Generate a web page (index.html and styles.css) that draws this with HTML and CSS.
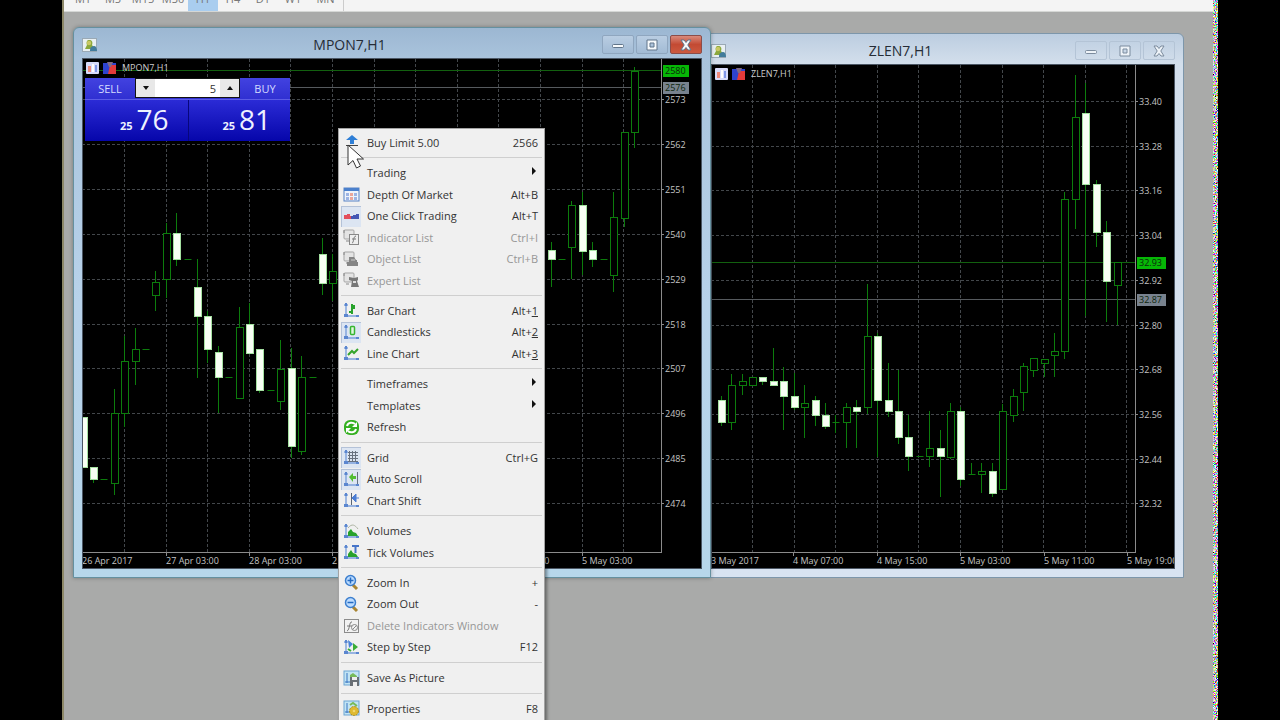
FILE: index.html
```html
<!DOCTYPE html>
<html lang="en">
<head>
<meta charset="utf-8">
<title>Trading terminal</title>
<link rel="stylesheet" href="styles.css">
</head>
<body>
<svg class="defs" aria-hidden="true">
  <defs>
    <g id="axes"><path d="M3 1v13h13M1 3h4M1 14h4" fill="none" stroke="#7ba0dc" stroke-width="1.4"/><path d="M2 1h2v3H2zM1 12h4v3H1zM13 13h3v2h-3z" fill="#5b86cf"/></g>
    <g id="list"><rect x="1" y="1" width="10" height="9" rx="1" fill="#e4e4e4" stroke="#a5a5a5"/><path d="M1 1v3M3 12h3" stroke="#888"/></g>
    <g id="appicon"><rect x=".5" y=".5" width="14" height="13" fill="#e9f0f2" stroke="#9aa9b5"/><path d="M7 2c3 0 4 2 3 5l3 4H3l2-4C4 4 5 2 7 2z" fill="#8ba83c"/><circle cx="7" cy="5" r="2.200" fill="#c9c763"/><path d="M8 12c0-3 2-4 4-4s3 2 3 5H8z" fill="#427c9c"/></g>
    <g id="depthicon"><rect width="13" height="12" rx="1" fill="#d8dcfa"/><path d="M2 4h3v6H2z" fill="#ef8b7c"/><path d="M6 2h2v8H6z" fill="#fff"/><path d="M9 3h2v7H9z" fill="#8097e8"/></g>
    <g id="clickicon"><path d="M0 1h13v11H0z" fill="#2e43cf"/><path d="M7 3h6v9H5z" fill="#e33b3b"/><path d="M4 0h6L8 5H6z" fill="#806b86"/></g>
  </defs>
</svg>
<div class="screen">
  <div class="terminal">
    <nav class="timeframes" aria-label="Timeframes">
      <button>M1</button><button>M5</button><button>M15</button><button>M30</button><button class="active">H1</button><button>H4</button><button>D1</button><button>W1</button><button>MN</button>
    </nav>
    <main class="workspace">
      <section class="window window-back">
        <header class="titlebar">
          <svg class="appicon" viewBox="0 0 15 14"><use href="#appicon"/></svg>
          <h2>ZLEN7,H1</h2>
          <button aria-label="Minimize"><svg viewBox="0 0 14 12"><rect x="1.500" y="5.500" width="11" height="3" rx="1"/></svg></button>
          <button aria-label="Maximize"><svg viewBox="0 0 14 12"><path fill-rule="evenodd" d="M2 1h10v10H2zM5 4h4v4H5z"/></svg></button>
          <button aria-label="Close"><svg viewBox="0 0 14 12"><path d="M2 1h3l2 2.500L9 1h3L8.800 6l3.200 5H9L7 8.500 5 11H2l3.200-5z"/></svg></button>
        </header>
        <div class="client">
          <svg class="chart" id="chart-zlen" viewBox="711 64 464 505"></svg>
          <div class="caption"><svg viewBox="0 0 13 12"><use href="#depthicon"/></svg><svg viewBox="0 0 13 12"><use href="#clickicon"/></svg><span>ZLEN7,H1</span></div>
        </div>
      </section>
      <section class="window window-front">
        <header class="titlebar">
          <svg class="appicon" viewBox="0 0 15 14"><use href="#appicon"/></svg>
          <h2>MPON7,H1</h2>
          <button aria-label="Minimize"><svg viewBox="0 0 14 12"><rect x="1.500" y="5.500" width="11" height="3" rx="1"/></svg></button>
          <button aria-label="Maximize"><svg viewBox="0 0 14 12"><path fill-rule="evenodd" d="M2 1h10v10H2zM5 4h4v4H5z"/></svg></button>
          <button class="close" aria-label="Close"><svg viewBox="0 0 14 12"><path d="M2 1h3l2 2.500L9 1h3L8.800 6l3.200 5H9L7 8.500 5 11H2l3.200-5z"/></svg></button>
        </header>
        <div class="client">
          <svg class="chart" id="chart-mpon" viewBox="82 58 620 511"></svg>
          <div class="caption"><svg viewBox="0 0 13 12"><use href="#depthicon"/></svg><svg viewBox="0 0 13 12"><use href="#clickicon"/></svg><span>MPON7,H1</span></div>
          <div class="oneclick">
            <div class="orders">
              <button class="side">SELL</button>
              <div class="volume"><button aria-label="Decrease volume"><i class="down"></i></button><input type="text" value="5" aria-label="Volume"><button aria-label="Increase volume"><i class="up"></i></button></div>
              <button class="side">BUY</button>
            </div>
            <div class="quotes">
              <button class="quote"><small>25</small><span>76</span></button>
              <button class="quote"><small>25</small><span>81</span></button>
            </div>
          </div>
        </div>
      </section>

      <div class="menu" role="menu">
        <div class="group">
          <button><svg class="ico" viewBox="0 0 17 17"><path d="M9 1l6 5h-4v4H7V6H3z" fill="#2f7fd6"/><path d="M3 11.500h12" stroke="#444"/></svg><span>Buy Limit 5.00</span><kbd>2566</kbd></button>
        </div>
        <div class="group">
          <button><i class="ico"></i><span>Trading</span><b class="arrow"></b></button>
          <button><svg class="ico" viewBox="0 0 17 17"><rect x="1" y="2" width="15" height="13" fill="#eef3fb" stroke="#5681c4"/><path d="M1 2h15v3H1z" fill="#4b80cc"/><path d="M3 7h3v3H3zM11 7h3v3h-3zM3 11h3v3H3zM11 11h3v3h-3z" fill="#9db4e4"/><path d="M7 7h3v3H7zM7 11h3v3H7z" fill="#eaa79b"/></svg><span>Depth Of Market</span><kbd>Alt+B</kbd></button>
          <button class="checked"><svg class="ico" viewBox="0 0 17 17"><path d="M1 7h3V6h3v2h2v3H1z" fill="#e44f5c"/><path d="M8 8h2V7h3V6h3v5H8z" fill="#4457b4"/></svg><span>One Click Trading</span><kbd>Alt+T</kbd></button>
          <button disabled><svg class="ico" viewBox="0 0 17 17"><use href="#list"/><rect x="6.500" y="5.500" width="9" height="10" fill="#eee" stroke="#888"/><path d="M9 14c2 0 1-7 4-7M9 10h4" fill="none" stroke="#777"/></svg><span>Indicator List</span><kbd>Ctrl+I</kbd></button>
          <button disabled><svg class="ico" viewBox="0 0 17 17"><use href="#list"/><path d="M6 6h5l2 3h1v2h1v4H4v-4h2z" fill="#858585"/><path d="M8 9h4" stroke="#ccc"/></svg><span>Object List</span><kbd>Ctrl+B</kbd></button>
          <button disabled><svg class="ico" viewBox="0 0 17 17"><use href="#list"/><path d="M6 5l5 1 4-1v3l-1 1 2 6H8l1-6-3-1z" fill="#777"/><path d="M10 9h3v2h-3z" fill="#ddd"/></svg><span>Expert List</span></button>
        </div>
        <div class="group">
          <button><svg class="ico" viewBox="0 0 17 17"><use href="#axes"/><path d="M9 2v10M9 4h3M6 10h3M11 3v4" fill="none" stroke="#28a32c" stroke-width="2"/></svg><span>Bar Chart</span><kbd>Alt+<u>1</u></kbd></button>
          <button class="checked"><svg class="ico" viewBox="0 0 17 17"><use href="#axes"/><rect x="7.500" y="2.500" width="4" height="8" rx="1" fill="#e2f6df" stroke="#35b530" stroke-width="1.500"/></svg><span>Candlesticks</span><kbd>Alt+<u>2</u></kbd></button>
          <button><svg class="ico" viewBox="0 0 17 17"><use href="#axes"/><path d="M5 10l4-4 2 2 4-4" fill="none" stroke="#35a52c" stroke-width="2"/></svg><span>Line Chart</span><kbd>Alt+<u>3</u></kbd></button>
        </div>
        <div class="group">
          <button><i class="ico"></i><span>Timeframes</span><b class="arrow"></b></button>
          <button><i class="ico"></i><span>Templates</span><b class="arrow"></b></button>
          <button><svg class="ico" viewBox="0 0 17 17"><rect x="1" y="1" width="15" height="15" rx="6" fill="#35b021"/><path d="M4 7c1-4 6-4 8-2M13 10c-1 4-6 4-8 2" fill="none" stroke="#fff" stroke-width="2"/><path d="M9 8h5V3zM8 9H3v5z" fill="#fff"/></svg><span>Refresh</span></button>
        </div>
        <div class="group">
          <button class="checked"><svg class="ico" viewBox="0 0 17 17"><use href="#axes"/><path d="M6.500 2v11M9.500 2v11M12.500 2v11M5 3.500h10M5 6.500h10M5 9.500h10M5 12.500h10" stroke="#68717f"/></svg><span>Grid</span><kbd>Ctrl+G</kbd></button>
          <button class="checked"><svg class="ico" viewBox="0 0 17 17"><use href="#axes"/><path d="M14.500 1v12" stroke="#66707f"/><path d="M6 6l4-4v3h3v3h-3v3z" fill="#51bd31"/></svg><span>Auto Scroll</span></button>
          <button><svg class="ico" viewBox="0 0 17 17"><use href="#axes"/><path d="M8.500 1v12" stroke="#596475"/><path d="M16 6h-3M13 2v8l-4-4z" fill="#4d7ed4" stroke="#4d7ed4"/></svg><span>Chart Shift</span></button>
        </div>
        <div class="group">
          <button><svg class="ico" viewBox="0 0 17 17"><use href="#axes"/><path d="M5 5c4-5 7-3 10 1" fill="none" stroke="#adb4a3"/><path d="M5 13V9l3-3 2 3 3 1 2 3z" fill="#29a22c"/></svg><span>Volumes</span></button>
          <button><svg class="ico" viewBox="0 0 17 17"><use href="#axes"/><path d="M5 13v-3l3-4 2 3 3 1 2 3z" fill="#29a22c"/><path d="M9 2h7M12.500 2v7" stroke="#4775c9" stroke-width="2"/></svg><span>Tick Volumes</span></button>
        </div>
        <div class="group">
          <button><svg class="ico" viewBox="0 0 17 17"><path d="M9 10l5 5" stroke="#a98532" stroke-width="3"/><circle cx="7.500" cy="6.500" r="5" fill="#bcdcff" stroke="#3d7fce" stroke-width="1.500"/><path d="M4.500 6.500h6M7.500 3.500v6" stroke="#256bc2" stroke-width="1.500"/></svg><span>Zoom In</span><kbd>+</kbd></button>
          <button><svg class="ico" viewBox="0 0 17 17"><path d="M9 10l5 5" stroke="#a98532" stroke-width="3"/><circle cx="7.500" cy="6.500" r="5" fill="#bcdcff" stroke="#3d7fce" stroke-width="1.500"/><path d="M4.500 6.500h6" stroke="#256bc2" stroke-width="1.500"/></svg><span>Zoom Out</span><kbd>-</kbd></button>
          <button disabled><svg class="ico" viewBox="0 0 17 17"><rect x="1.500" y="2.500" width="14" height="13" fill="#f2f2f2" stroke="#8b8b8b"/><path d="M4 14c3-1 2-10 5-9M4 9h5" fill="none" stroke="#777"/><circle cx="11.500" cy="10.500" r="3" fill="none" stroke="#888"/><path d="M9.500 12.500l4-4" stroke="#888"/></svg><span>Delete Indicators Window</span></button>
          <button><svg class="ico" viewBox="0 0 17 17"><use href="#axes"/><path d="M5 1l5 4-4 4z" fill="#4a83d8"/><path d="M10 4l5 4-5 4z" fill="#39ad37"/><path d="M5 10l3 2" stroke="#39ad37" stroke-width="2"/></svg><span>Step by Step</span><kbd>F12</kbd></button>
        </div>
        <div class="group">
          <button><svg class="ico" viewBox="0 0 17 17"><rect x="1" y="1" width="15" height="14" fill="#c2e4f4" stroke="#6da5d3"/><path d="M4 3v10M2 12h5" stroke="#3975c2"/><path d="M7 5l3-2 4 3v3H7z" fill="#77bb5a"/><path d="M7 7h9v9H7z" fill="#686e75"/><path d="M9 7h5v3H9zM10 12h4v4h-4z" fill="#eee"/></svg><span>Save As Picture</span></button>
        </div>
        <div class="group">
          <button><svg class="ico" viewBox="0 0 17 17"><rect x="1" y="1" width="15" height="14" fill="#c2e4f4" stroke="#6da5d3"/><path d="M4 3v10M2 12h5" stroke="#3975c2"/><path d="M7 5l3-2 4 3" fill="none" stroke="#77bb5a" stroke-width="2"/><circle cx="11" cy="11" r="4.500" fill="#dfba31" stroke="#ab8b20" stroke-dasharray="2 1"/><circle cx="11" cy="11" r="1.300" fill="#f0d870"/></svg><span>Properties</span><kbd>F8</kbd></button>
        </div>
      </div>
      <svg class="cursor" viewBox="0 0 18 26" aria-hidden="true"><path d="M1 1v20l5-4.500 3.500 7.500 4-2-3.500-7h6.500z" fill="#fff" stroke="#333"/></svg>
    </main>
  </div>
  <svg class="noise" aria-hidden="true"><filter id="grain" x="0" y="0" width="100%" height="100%"><feTurbulence type="fractalNoise" baseFrequency="0.9" numOctaves="2"/><feColorMatrix values="4 0 0 0 -1.400 0 4 0 0 -1.400 0 0 4 0 -1.400 0 0 0 0 1"/></filter><rect width="100%" height="100%" filter="url(#grain)"/></svg>
</div>
<script src="chart.js"></script>
</body>
</html>
```

FILE: styles.css
```css
* { box-sizing: border-box; }
body { margin: 0; background: #000; color: #333; font-family: "Open Sans", "Noto Sans", sans-serif; font-size: 11px; overflow: hidden; }
button { font: inherit; color: inherit; border: 0; padding: 0; margin: 0; background: none; }
.defs { position: absolute; width: 0; height: 0; }
.screen { display: flex; height: 100vh; margin: 0 62px; }
.terminal { flex: 1; display: flex; flex-direction: column; min-width: 0; border-left: 2px solid #8d8868; }
.noise { width: 5px; height: 100%; flex: none; }

.timeframes { display: flex; align-items: flex-end; height: 12px; flex: none; overflow: hidden; padding-left: 4px; background: #f4f4f4; border-bottom: 1px solid #d5d7d5; }
.timeframes button { flex: none; display: flex; align-items: flex-end; justify-content: center; width: 30px; height: 20px; padding-bottom: 4px; color: #777; line-height: 16px; }
.timeframes .active { background: #a9cdef; }
.timeframes button:last-child { width: 36px; border-right: 1px solid #ccc; }

.workspace { flex: 1; position: relative; overflow: hidden; background: #a9aaa9; }
.window { position: absolute; padding: 0 8px 8px; border: 1px solid #7d96aa; border-radius: 6px 6px 0 0; }
.window-front { left: 9px; top: 15px; width: 638px; background: linear-gradient(#9cb7d2, #a9c3dc 30px, #b8d2ea 50%, #b7d7eb); border-color: #65909f; box-shadow: 0 0 4px rgba(0, 0, 0, .3); }
.window-back { left: 638px; top: 21px; width: 482px; background: linear-gradient(#bccde0, #d3dfec 30px, #d8e3f1); }
.titlebar { display: flex; align-items: center; gap: 2px; height: 30px; padding-top: 3px; }
.titlebar h2 { flex: 1; margin: 0; text-align: center; font-size: 14px; line-height: 20px; font-weight: 400; color: #252c36; }
.appicon { width: 15px; height: 14px; }
.titlebar button { width: 32px; height: 19px; display: flex; align-items: center; justify-content: center; border: 1px solid #8fa6bf; border-radius: 2px; background: linear-gradient(#b9cde2, #a2bbd5); }
.titlebar button svg { width: 14px; height: 12px; fill: #f7fafc; stroke: #61758a; stroke-width: 1; }
.titlebar .close { border-color: #8c4d49; background: linear-gradient(#d98a7c, #c34a33 50%, #cc5a40); }
.window-back .titlebar button { background: none; border-color: #b4c4d6; }
.window-back .titlebar button svg { fill: #eef3f8; stroke: #7b8b9d; }
.client { position: relative; background: #000; outline: 1px solid #4b5664; outline-offset: -1px; }
.chart { display: block; width: 100%; height: auto; }
.chart .grid { stroke: #43474b; stroke-dasharray: 3 2; }
.chart .axis { stroke: #8b8b8b; stroke-width: 1; }
.chart .bid { stroke: #12600f; }
.chart .ask { stroke: #565a5e; }
.chart .hollow { fill: #000; stroke: #0c7c0c; }
.chart .solid { fill: #f8fff4; stroke: #a4e0a0; }
.chart .wick { stroke: #0c7c0c; }
.chart text { fill: #c4c4c4; font-size: 9px; }
.chart .tag-green { fill: #06b606; }
.chart .tag-gray { fill: #78828e; }
.chart .tag-text { fill: #0c260c; }
.caption { position: absolute; left: 4px; top: 3px; display: flex; align-items: center; gap: 4px; height: 13px; color: #ccc; font-size: 9px; }
.caption svg { width: 13px; height: 12px; }
.caption span { margin-left: 2px; }

.oneclick { position: absolute; left: 3px; top: 20px; width: 205px; color: #d5dcff; background: linear-gradient(#4242e0, #0b0bb4); }
.orders { display: flex; height: 21px; }
.side { flex: 1; line-height: 20px; font-size: 11px; }
.volume { display: flex; width: 105px; height: 20px; border: 1px solid #111; background: #fff; }
.volume button { width: 19px; display: flex; align-items: center; justify-content: center; background: #e8e8e8; }
.volume input { flex: 1; min-width: 0; border: 0; padding: 0 4px; text-align: right; font: inherit; color: #333; }
.up, .down { border: 3px solid transparent; }
.up { border-bottom: 4px solid #111; border-top: 0; }
.down { border-top: 4px solid #111; border-bottom: 0; }
.quotes { display: grid; grid-template-columns: 1fr 1fr; border-top: 1px solid #5c5ce6; }
.quote { display: flex; align-items: baseline; justify-content: flex-end; gap: 4px; height: 41px; padding-right: 19px; line-height: 38px; font-size: 28px; color: #eef1ff; background: linear-gradient(#2b2bd6, #0606aa); }
.quote + .quote { border-left: 1px solid #07077c; }
.quote small { font-size: 11px; font-weight: 700; }

.menu { position: absolute; left: 274px; top: 116px; width: 207px; padding: 3px 2px 4px; background: #f0f0f0; border: 1px solid #a3a3a3; box-shadow: 2px 2px 3px rgba(0, 0, 0, .4); }
.group { display: flex; flex-direction: column; }
.group + .group { margin-top: 4px; padding-top: 4px; border-top: 1px solid #cfcfcf; }
.menu button { display: flex; align-items: center; height: 21px; padding-right: 4px; text-align: left; line-height: 16px; }
.group:nth-child(even) button:nth-child(odd), .group:nth-child(odd) button:nth-child(even) { height: 22px; }
.menu span { flex: 1; margin-left: 6px; white-space: nowrap; }
.menu kbd { font: inherit; }
.menu button:disabled { color: #979797; }
.ico { flex: none; width: 20px; height: 21px; padding: 2px 1px 2px 2px; }
.checked .ico { background: #dce5f2; box-shadow: inset 1px 1px #b4c2d8; }
.arrow { border: 4px solid transparent; border-left-color: #111; border-right: 0; margin-right: 2px; margin-bottom: 4px; }
.cursor { position: absolute; left: 283px; top: 132px; width: 18px; height: 26px; }
```

FILE: chart.js
```js
// Candle rows: x, body top, body bottom, high, low, kind (1 = solid, 0 = hollow or flat).
const MPON = [
  [83,417,467,417,467,1],[93,467,479,467,483,1],[103,479,479,479,479,0],[114,413,483,389,495,0],
  [124,361,413,336,427,0],[135,349,361,328,385,0],[145,349,349,349,349,0],[155,282,295,271,311,0],
  [166,233,279,223,298,0],[176,233,259,213,266,1],[187,259,259,259,259,0],[197,287,316,259,378,1],
  [207,316,349,311,363,1],[218,352,377,346,413,1],[228,377,377,377,377,0],[239,327,398,307,398,0],
  [249,324,353,303,353,1],[259,349,390,349,393,1],[270,390,390,390,390,0],[280,369,401,340,410,0],
  [291,368,446,348,458,1],[301,377,451,356,455,0],[312,377,377,377,377,0],[322,254,283,238,295,1],
  [332,271,283,254,301,0],[551,250,259,242,287,1],[561,259,259,259,259,0],[571,205,247,201,279,0],
  [582,205,251,192,275,1],[592,250,259,242,267,1],[603,259,259,259,259,0],[613,217,275,192,292,0],
  [624,132,218,132,227,0],[634,71,132,67,148,0]
];
const ZLEN = [
  [721,400,422,396,426,1],[731,385,422,374,430,0],[742,381,385,374,395,0],[752,377,385,377,385,0],
  [762,377,381,377,385,1],[773,381,385,348,385,1],[783,381,396,367,430,1],[794,396,407,373,410,1],
  [804,403,407,385,438,0],[815,400,415,396,426,1],[825,415,426,403,429,1],[835,422,422,415,433,0],
  [846,407,422,403,448,0],[856,407,411,400,448,1],[867,336,407,284,414,0],[877,336,400,333,457,1],
  [888,400,411,363,417,1],[898,411,437,370,444,1],[908,437,456,415,471,1],[919,456,456,456,456,0],
  [929,448,456,411,467,0],[940,448,456,430,497,1],[950,411,457,403,459,0],[960,411,479,407,486,1],
  [971,474,474,463,474,0],[981,471,474,463,493,0],[992,471,493,463,497,1],[1002,411,489,404,489,0],
  [1013,396,415,389,422,0],[1023,366,392,363,411,0],[1033,358,370,358,377,0],[1044,359,363,359,377,0],
  [1054,351,355,333,377,0],[1064,199,351,192,359,0],[1075,117,199,75,229,0],[1085,113,184,83,316,1],
  [1096,184,232,180,247,1],[1106,232,281,221,322,1],[1117,262,285,262,325,0]
];

function drawChart(id, o) {
  const line = (c, x1, y1, x2, y2) => `<line class="${c}" x1="${x1}" y1="${y1}" x2="${x2}" y2="${y2}"/>`;
  let s = "";
  for (let i = 0; i < o.columns; i++) {
    const x = Math.round(o.gridX + i * 41.6) + 0.5;
    s += line("grid", x, o.top, x, 552);
  }
  o.prices.forEach((p, i) => {
    const y = Math.round(o.gridY + i * o.stepY) + 0.5;
    s += line("grid", o.left, y, o.axis, y) + line("axis", o.axis, y, o.axis + 3, y);
    s += `<text x="${o.axis + 4}" y="${y + 3}">${p}</text>`;
  });
  s += line("bid", o.left, o.bid + 0.5, o.axis, o.bid + 0.5) + line("ask", o.left, o.ask + 0.5, o.axis, o.ask + 0.5);
  o.candles.forEach(([x, t, b, hi, lo, solid]) => {
    x += 0.5;
    if (lo > hi) s += line("wick", x, hi, x, lo);
    if (b > t) s += `<rect class="${solid ? "solid" : "hollow"}" x="${x - 3}" y="${t + 0.5}" width="7" height="${b - t}"/>`;
    else s += line("wick", x - 3, t + 0.5, x + 4, t + 0.5);
  });
  const a = o.axis + 0.5;
  s += line("axis", a, o.top, a, 553) + line("axis", o.left, 552.5, a, 552.5);
  [["tag-green", o.bid, o.bidText], ["tag-gray", o.ask, o.askText]].forEach(([c, y, t]) => {
    s += `<rect class="${c}" x="${o.axis + 2}" y="${y - 5}" width="${o.tag}" height="12"/>`;
    s += `<text class="tag-text" x="${o.axis + 4}" y="${y + 4}">${t}</text>`;
  });
  o.dates.forEach(([x, t]) => {
    s += line("axis", x + 0.5, 552, x + 0.5, 556) + `<text x="${x}" y="564">${t}</text>`;
  });
  document.getElementById(id).innerHTML = s;
}

drawChart("chart-mpon", {
  left: 82, top: 59, axis: 661, gridX: 124, columns: 13, gridY: 99, stepY: 44.9,
  prices: [2573, 2562, 2551, 2540, 2529, 2518, 2507, 2496, 2485, 2474],
  bid: 70, bidText: "2580", ask: 87, askText: "2576", tag: 26, candles: MPON,
  dates: [[82, "26 Apr 2017"], [166, "27 Apr 03:00"], [249, "28 Apr 03:00"], [332, "2 May 03:00"], [499, "4 May 03:00"], [582, "5 May 03:00"]]
});
drawChart("chart-zlen", {
  left: 711, top: 65, axis: 1135, gridX: 752, columns: 10, gridY: 101, stepY: 44.7,
  prices: ["33.40", "33.28", "33.16", "33.04", "32.92", "32.80", "32.68", "32.56", "32.44", "32.32"],
  bid: 262, bidText: "32.93", ask: 299, askText: "32.87", tag: 29, candles: ZLEN,
  dates: [[711, "3 May 2017"], [793, "4 May 07:00"], [877, "4 May 15:00"], [960, "5 May 03:00"], [1044, "5 May 11:00"], [1127, "5 May 19:00"]]
});
```
